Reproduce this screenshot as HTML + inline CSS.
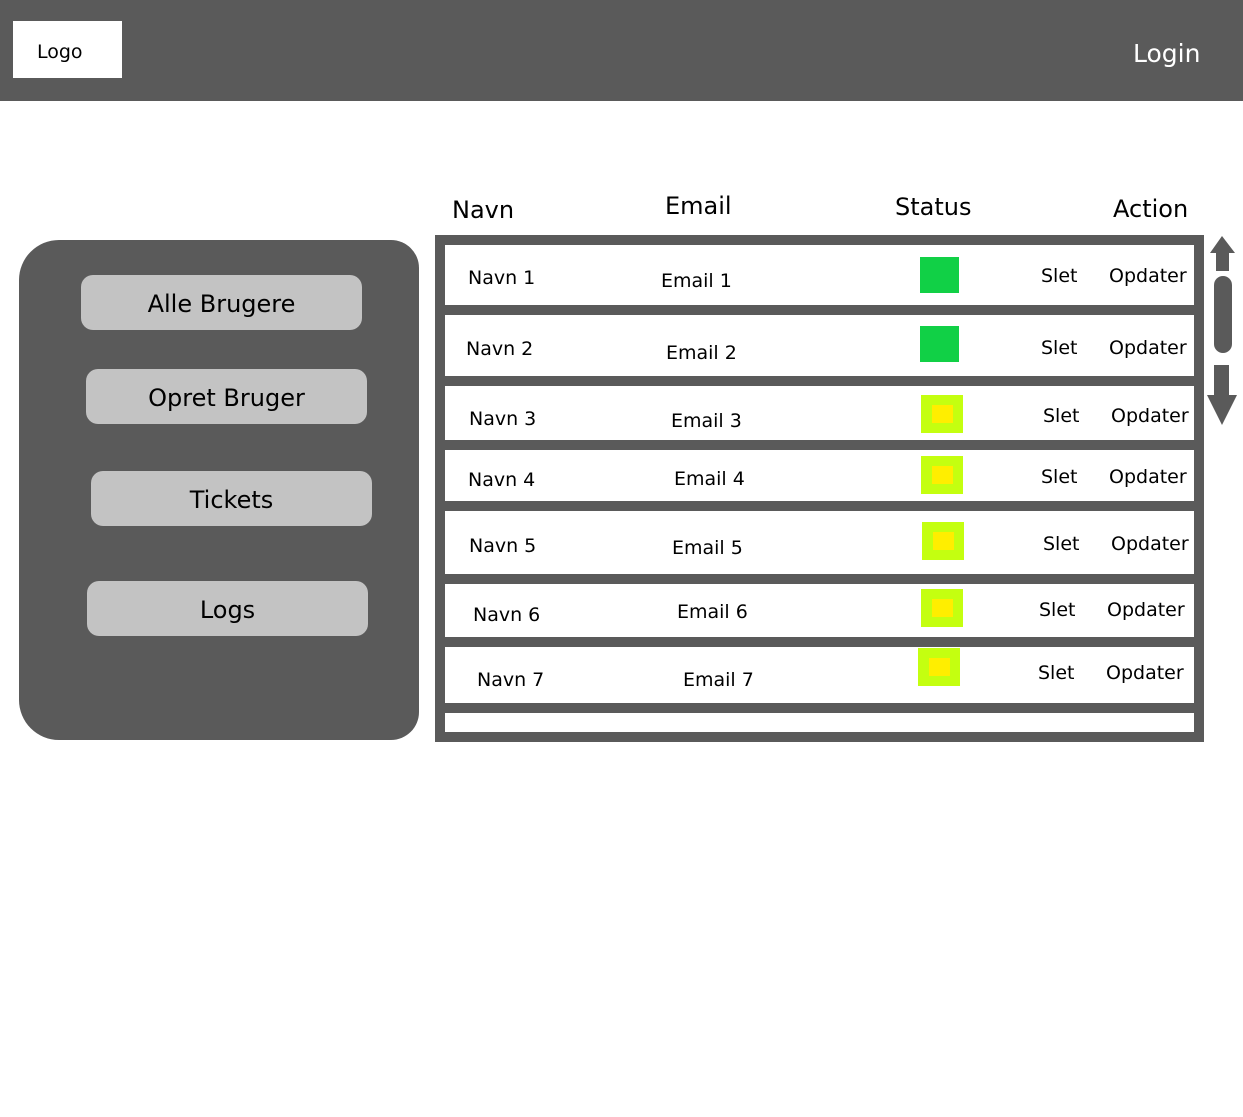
<!DOCTYPE html>
<html><head><meta charset="utf-8"><style>
body{margin:0;width:1243px;height:1117px;background:#fff;position:relative;overflow:hidden;font-family:"Segoe UI","DejaVu Sans","Liberation Sans",sans-serif;color:#000}
.a{position:absolute;white-space:nowrap}
.hdr{left:0;top:0;width:1243px;height:101px;background:#5a5a5a}
.logo{left:13px;top:21px;width:109px;height:57px;background:#fff;font-size:19px;line-height:62px;text-indent:24px}
.login{left:1133px;top:39px;color:#fff;font-size:25px}
.side{left:19px;top:240px;width:400px;height:500px;background:#5a5a5a;border-radius:40px 28px 28px 40px}
.btn{background:#c3c3c3;border-radius:12px;width:281px;height:55px;font-size:24px;text-align:center;line-height:58px}
.th{font-size:24px}
.panel{left:435px;top:235px;width:769px;height:507px;background:#5a5a5a}
.row{left:445px;width:749px;background:#fff}
.t{font-size:19px;margin-top:2px}
.g{width:39px;height:36px;background:#11d046}
.y{width:42px;height:38px;background:#c4ff10}
.y::after{content:"";position:absolute;left:11px;top:10px;width:21px;height:18px;background:#ffee00}
</style></head><body>
<div class="a hdr"></div>
<div class="a logo">Logo</div>
<div class="a login">Login</div>
<div class="a side"></div>
<div class="a btn" style="left:81px;top:275px">Alle Brugere</div>
<div class="a btn" style="left:86px;top:369px">Opret Bruger</div>
<div class="a btn" style="left:91px;top:471px">Tickets</div>
<div class="a btn" style="left:87px;top:581px">Logs</div>
<div class="a th" style="left:452px;top:196px">Navn</div>
<div class="a th" style="left:665px;top:192px">Email</div>
<div class="a th" style="left:895px;top:193px">Status</div>
<div class="a th" style="left:1113px;top:195px">Action</div>
<div class="a panel"></div>
<div class="a row" style="top:245px;height:60px"></div>
<div class="a row" style="top:315px;height:61px"></div>
<div class="a row" style="top:386px;height:54px"></div>
<div class="a row" style="top:450px;height:51px"></div>
<div class="a row" style="top:511px;height:63px"></div>
<div class="a row" style="top:584px;height:53px"></div>
<div class="a row" style="top:647px;height:56px"></div>
<div class="a row" style="top:713px;height:19px"></div>

<div class="a t" style="left:468px;top:265px">Navn 1</div><div class="a t" style="left:661px;top:268px">Email 1</div><div class="a g" style="left:920px;top:257px"></div><div class="a t" style="left:1041px;top:263px">Slet</div><div class="a t" style="left:1109px;top:263px">Opdater</div>
<div class="a t" style="left:466px;top:336px">Navn 2</div><div class="a t" style="left:666px;top:340px">Email 2</div><div class="a g" style="left:920px;top:326px"></div><div class="a t" style="left:1041px;top:335px">Slet</div><div class="a t" style="left:1109px;top:335px">Opdater</div>
<div class="a t" style="left:469px;top:406px">Navn 3</div><div class="a t" style="left:671px;top:408px">Email 3</div><div class="a y" style="left:921px;top:395px"></div><div class="a t" style="left:1043px;top:403px">Slet</div><div class="a t" style="left:1111px;top:403px">Opdater</div>
<div class="a t" style="left:468px;top:467px">Navn 4</div><div class="a t" style="left:674px;top:466px">Email 4</div><div class="a y" style="left:921px;top:456px"></div><div class="a t" style="left:1041px;top:464px">Slet</div><div class="a t" style="left:1109px;top:464px">Opdater</div>
<div class="a t" style="left:469px;top:533px">Navn 5</div><div class="a t" style="left:672px;top:535px">Email 5</div><div class="a y" style="left:922px;top:522px"></div><div class="a t" style="left:1043px;top:531px">Slet</div><div class="a t" style="left:1111px;top:531px">Opdater</div>
<div class="a t" style="left:473px;top:602px">Navn 6</div><div class="a t" style="left:677px;top:599px">Email 6</div><div class="a y" style="left:921px;top:589px"></div><div class="a t" style="left:1039px;top:597px">Slet</div><div class="a t" style="left:1107px;top:597px">Opdater</div>
<div class="a t" style="left:477px;top:667px">Navn 7</div><div class="a t" style="left:683px;top:667px">Email 7</div><div class="a y" style="left:918px;top:648px"></div><div class="a t" style="left:1038px;top:660px">Slet</div><div class="a t" style="left:1106px;top:660px">Opdater</div>

<svg class="a" style="left:1200px;top:230px" width="43" height="200" viewBox="1200 230 43 200">
<path d="M1222 236 L1235 253 L1229 253 L1229 271 L1216 271 L1216 253 L1210 253 Z" fill="#5a5a5a"/>
<rect x="1214" y="276" width="18" height="77" rx="9" fill="#5a5a5a"/>
<path d="M1214 365 L1229 365 L1229 395 L1237 395 L1222 425 L1207 395 L1214 395 Z" fill="#5a5a5a"/>
</svg>
</body></html>
